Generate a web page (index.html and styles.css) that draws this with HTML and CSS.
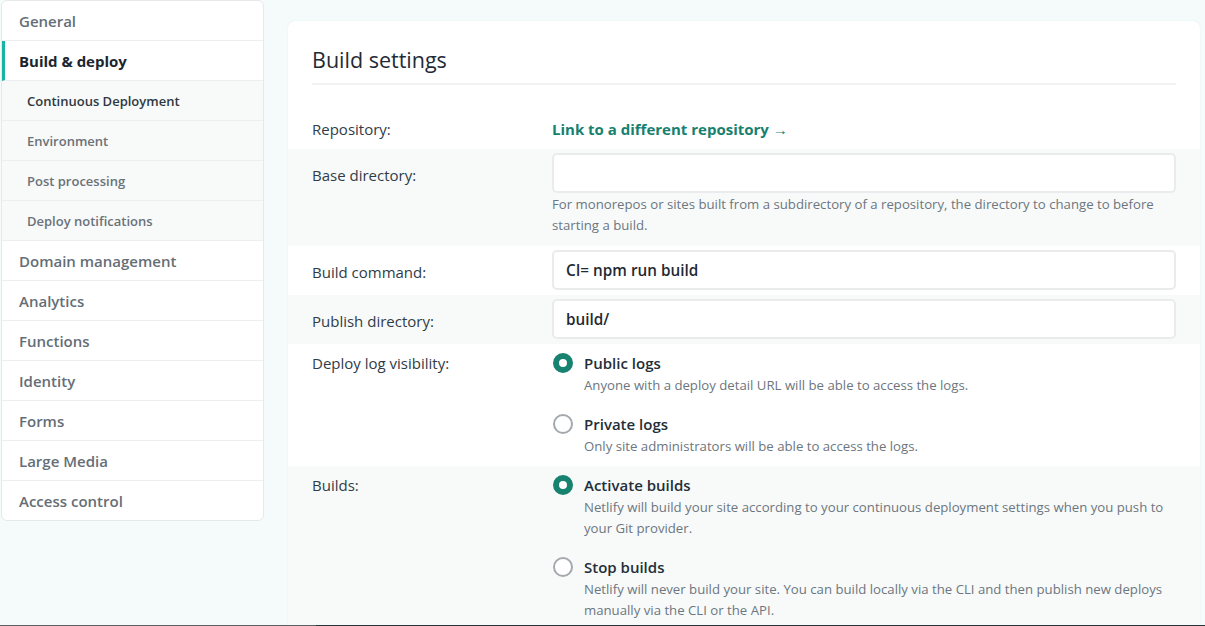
FILE: index.html
```html
<!DOCTYPE html>
<html lang="en">
<head>
<meta charset="utf-8">
<title>Build &amp; deploy</title>
<link rel="stylesheet" href="styles.css">
</head>
<body>
<div class="layout">
  <nav class="sidebar">
    <a class="nav-item">General</a>
    <a class="nav-item active">Build &amp; deploy</a>
    <a class="nav-sub current">Continuous Deployment</a>
    <a class="nav-sub">Environment</a>
    <a class="nav-sub">Post processing</a>
    <a class="nav-sub">Deploy notifications</a>
    <a class="nav-item">Domain management</a>
    <a class="nav-item">Analytics</a>
    <a class="nav-item">Functions</a>
    <a class="nav-item">Identity</a>
    <a class="nav-item">Forms</a>
    <a class="nav-item">Large Media</a>
    <a class="nav-item last">Access control</a>
  </nav>

  <main class="card">
    <header class="card-head">
      <h2 class="card-title">Build settings</h2>
    </header>

    <div class="row repo-row">
      <div class="label">Repository:</div>
      <div class="field"><a class="link">Link to a different repository →</a></div>
    </div>

    <div class="row alt">
      <div class="label input-label">Base directory:</div>
      <div class="field">
        <div class="input"></div>
        <p class="help">For monorepos or sites built from a subdirectory of a repository, the directory to change to before starting a build.</p>
      </div>
    </div>

    <div class="row">
      <div class="label input-label">Build command:</div>
      <div class="field"><div class="input">CI= npm run build</div></div>
    </div>

    <div class="row alt">
      <div class="label input-label">Publish directory:</div>
      <div class="field"><div class="input">build/</div></div>
    </div>

    <div class="row radio-row">
      <div class="label">Deploy log visibility:</div>
      <div class="field">
        <div class="option">
          <span class="radio checked"></span>
          <div class="opt-text">
            <div class="opt-title">Public logs</div>
            <div class="opt-desc">Anyone with a deploy detail URL will be able to access the logs.</div>
          </div>
        </div>
        <div class="option">
          <span class="radio"></span>
          <div class="opt-text">
            <div class="opt-title">Private logs</div>
            <div class="opt-desc">Only site administrators will be able to access the logs.</div>
          </div>
        </div>
      </div>
    </div>

    <div class="row alt radio-row">
      <div class="label">Builds:</div>
      <div class="field">
        <div class="option">
          <span class="radio checked"></span>
          <div class="opt-text">
            <div class="opt-title">Activate builds</div>
            <div class="opt-desc">Netlify will build your site according to your continuous deployment settings when you push to your Git provider.</div>
          </div>
        </div>
        <div class="option">
          <span class="radio"></span>
          <div class="opt-text">
            <div class="opt-title">Stop builds</div>
            <div class="opt-desc">Netlify will never build your site. You can build locally via the CLI and then publish new deploys manually via the CLI or the API.</div>
          </div>
        </div>
      </div>
    </div>
  </main>
</div>
<div class="screen-edge"></div>
</body>
</html>
```

FILE: styles.css
```css
* { box-sizing: border-box; }

html, body {
  margin: 0;
  padding: 0;
}

body {
  background: #f5fbfb;
  font-family: "Open Sans", "Noto Sans", "Liberation Sans", sans-serif;
  color: #2d3b45;
  height: 626px;
  overflow: hidden;
}

.layout {
  display: flex;
  align-items: flex-start;
  padding-left: 1px;
}

/* Sidebar */
.sidebar {
  width: 263px;
  flex: none;
  display: flex;
  flex-direction: column;
  background: #fff;
  border: 1px solid #e6e9ea;
  border-radius: 6px;
  overflow: hidden;
}

.nav-item,
.nav-sub {
  display: block;
  height: 40px;
  line-height: 39px;
  padding-top: 1px;
  border-bottom: 1px solid #eceeef;
  white-space: nowrap;
}

.nav-item {
  padding-left: 17px;
  font-size: 15px;
  font-weight: 600;
  color: #656e76;
}

.nav-item.last { border-bottom: none; height: 39px; }

.nav-item.active {
  color: #1b2630;
  font-weight: 700;
  border-left: 3px solid #17b3a3;
  padding-left: 14px;
}

.nav-sub {
  padding-left: 25px;
  font-size: 13px;
  font-weight: 600;
  color: #6a7279;
  background: #f8f9f9;
}

.nav-sub.current { color: #2e3840; }

/* Card */
.card {
  flex: none;
  width: 912px;
  margin-left: 24px;
  margin-top: 21px;
  background: #fff;
  border-radius: 8px 8px 0 0;
  box-shadow: 0 0 3px rgba(20, 60, 60, 0.05);
  min-height: 700px;
}

.card-head {
  margin: 0 24px;
  padding-top: 24px;
  border-bottom: 2px solid #f1f3f3;
  height: 64px;
}

.card-title {
  margin: 0;
  font-size: 21.5px;
  font-weight: 500;
  line-height: 30px;
  color: #1f2b36;
}

.row {
  display: grid;
  grid-template-columns: 240px 624px;
  padding: 4px 24px 5px;
}

.row.alt { background: #f8fafa; }

.repo-row {
  margin-top: 24px;
  padding-top: 0;
  padding-bottom: 0;
  height: 40px;
  align-items: center;
}

.label {
  font-size: 15px;
  color: #303c47;
  line-height: 22px;
}

.input-label {
  line-height: 22px;
  padding-top: 11px;
}

.link {
  font-size: 15px;
  font-weight: 700;
  color: #17806f;
  text-decoration: none;
}

.input {
  height: 40px;
  border: 2px solid #e9ebec;
  border-radius: 5px;
  background: #fff;
  padding: 0 12px;
  line-height: 36px;
  font-size: 15.3px;
  font-weight: 600;
  color: #1f2a33;
}

.help {
  margin: 1px 0 0;
  padding-bottom: 5px;
  font-size: 13.2px;
  line-height: 21px;
  color: #6c7680;
}

.radio-row {
  padding-top: 8px;
  padding-bottom: 0;
}

.radio-row .label { padding-top: 0; }

.option {
  display: flex;
  align-items: flex-start;
  gap: 11px;
  margin-bottom: 17px;
}

.option:last-child { margin-bottom: 9px; }

.radio {
  flex: none;
  width: 20px;
  height: 20px;
  margin-top: 1px;
  margin-left: 1px;
  border-radius: 50%;
  background: #fff;
  border: 2px solid #a4a9ad;
}

.radio.checked {
  border: 6px solid #16826f;
  background: #fff;
}

.opt-title {
  font-size: 15px;
  font-weight: 600;
  line-height: 22px;
  color: #222e38;
}

.opt-desc {
  margin-top: 1px;
  font-size: 13.2px;
  line-height: 21px;
  color: #6c7680;
}

.screen-edge {
  position: fixed;
  left: 0;
  right: 0;
  bottom: 0;
  height: 1px;
  background: linear-gradient(to right, #5b5f5f 0, #5b5f5f 316px, #283333 316px);
}
```
